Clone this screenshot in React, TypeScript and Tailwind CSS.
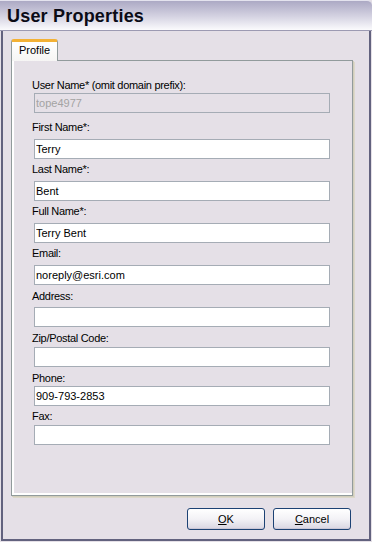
const fields: { label: string; value: string; disabled?: boolean; labelGap: string; inputGap: string }[] = [
  { label: "User Name* (omit domain prefix):", value: "tope4977", disabled: true, labelGap: "mt-0", inputGap: "mt-[1px]" },
  { label: "First Name*:", value: "Terry", labelGap: "mt-[7px]", inputGap: "mt-[5px]" },
  { label: "Last Name*:", value: "Bent", labelGap: "mt-[3px]", inputGap: "mt-[5px]" },
  { label: "Full Name*:", value: "Terry Bent", labelGap: "mt-[3px]", inputGap: "mt-[5px]" },
  { label: "Email:", value: "noreply@esri.com", labelGap: "mt-[3px]", inputGap: "mt-[5px]" },
  { label: "Address:", value: "", labelGap: "mt-[4px]", inputGap: "mt-[4px]" },
  { label: "Zip/Postal Code:", value: "", labelGap: "mt-[4px]", inputGap: "mt-[2px]" },
  { label: "Phone:", value: "909-793-2853", labelGap: "mt-[4px]", inputGap: "mt-[1px]" },
  { label: "Fax:", value: "", labelGap: "mt-[3px]", inputGap: "mt-[2px]" },
];

export default function App() {
  return (
    <div className="flex h-[542px] w-[372px] flex-col bg-[#e5e0e7] font-['Liberation_Sans',Arial,sans-serif] text-[11px] text-black">
      <TitleBar />
      <div className="mx-[1px] mb-[1px] flex flex-1 flex-col border-x-2 border-b-2 border-[#62627e] pb-[9px] pl-[8px] pr-[16px] pt-[8px]">
        <Tabs />
        <div className="mt-[12px] flex justify-end gap-[8px] pr-[2px]">
          <DialogButton mnemonic="O" rest="K" />
          <DialogButton mnemonic="C" rest="ancel" />
        </div>
      </div>
    </div>
  );
}

function TitleBar() {
  return (
    <div className="flex h-[31px] items-center rounded-tr-[5px] border-b border-t border-b-[#9c9ab2] border-t-[#e4e3ee] bg-gradient-to-b from-[#aca9c4] via-[#d2d0e0] to-[#fbfbfd] pl-[7px]">
      <span className="text-[18px] font-bold leading-none tracking-[0.2px] text-[#0b0b16]">User Properties</span>
    </div>
  );
}

function Tabs() {
  return (
    <div className="flex flex-1 flex-col">
      <div className="relative z-10 -mb-px flex h-[22px] w-[47px] items-center rounded-t-[3px] border-x border-t-[3px] border-x-[#919b9c] border-t-[#f3b135] bg-gradient-to-b from-[#ffffff] to-[#f6f5f4] pl-[7px] pb-[2px]">
        Profile
      </div>
      <div className="flex w-[342px] flex-1 flex-col border border-[#919b9c] pl-[20px] pt-[17px] shadow-[inset_2px_0_0_#ffffff,inset_0_-2px_0_#ffffff,1px_1px_0_#d2cebc,2px_2px_0_#dcd8ca]">
        {fields.map((field) => (
          <div className="flex flex-col" key={field.label}>
            <label className={`h-[14px] leading-[14px] tracking-[-0.3px] ${field.labelGap}`}>{field.label}</label>
            <input
              className={`ml-[2px] h-[20px] w-[296px] border border-[#a5acb5] px-[1px] outline-none ${field.inputGap} ${
                field.disabled ? "bg-transparent text-[#a3a3a3]" : "bg-white text-black"
              }`}
              readOnly
              value={field.value}
            />
          </div>
        ))}
      </div>
    </div>
  );
}

function DialogButton({ mnemonic, rest }: { mnemonic: string; rest: string }) {
  return (
    <button
      className="flex h-[22px] w-[78px] items-center justify-center rounded-[3px] border border-[#1c4274] bg-gradient-to-b from-[#ffffff] via-[#f3f2f6] to-[#d9d6e2] text-[11px] text-black shadow-[inset_0_-1px_0_#cbc7d6]"
      type="button"
    >
      <span>
        <span className="underline">{mnemonic}</span>
        {rest}
      </span>
    </button>
  );
}
